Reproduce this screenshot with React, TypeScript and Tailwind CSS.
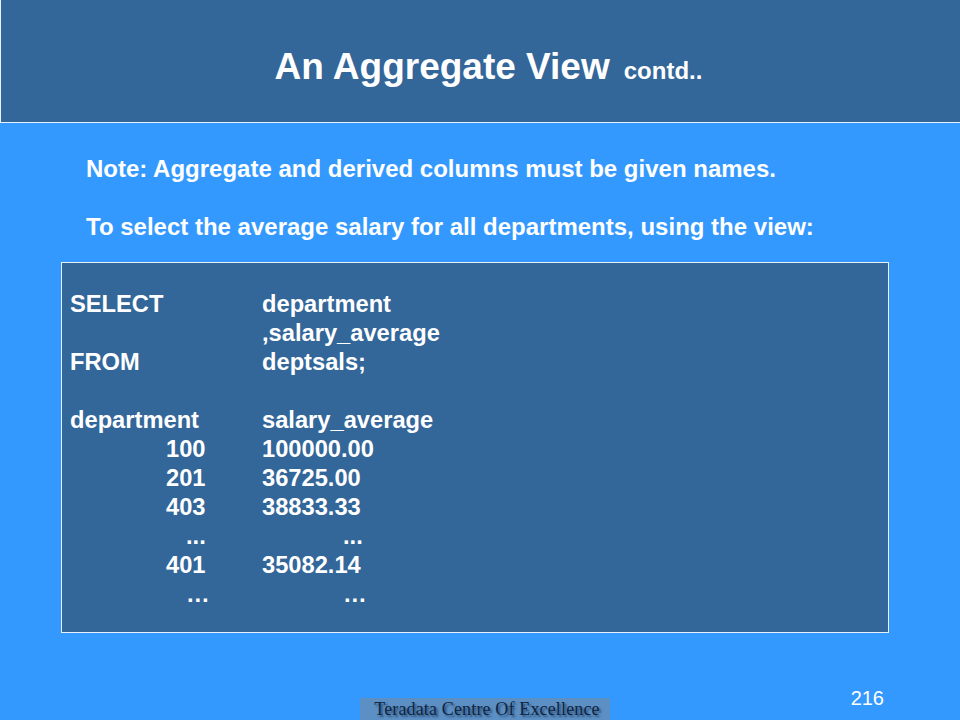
const rows: [string, string, string?][] = [
  ['SELECT', 'department'],
  ['', ',salary_average'],
  ['FROM', 'deptsals;'],
  ['', ''],
  ['department', 'salary_average'],
  ['100', '100000.00', 'pl-[96px]'],
  ['201', '36725.00', 'pl-[96px]'],
  ['403', '38833.33', 'pl-[96px]'],
  ['...', '...', 'dots'],
  ['401', '35082.14', 'pl-[96px]'],
  ['…', '…', 'dots'],
]

function CodeRow({ left, right, kind }: { left: string; right: string; kind?: string }) {
  if (kind === 'dots') {
    return (
      <div className="flex h-[29px]">
        <div className="w-[192px] pl-[116px]">{left}</div>
        <div className="pl-[81px]">{right}</div>
      </div>
    )
  }
  return (
    <div className="flex h-[29px]">
      <div className={`w-[192px] ${kind ?? ''}`}>{left}</div>
      <div>{right}</div>
    </div>
  )
}

export default function App() {
  return (
    <div className="w-[960px] h-[720px] overflow-hidden bg-[#3399ff] text-white font-['Liberation_Sans',Arial,sans-serif] font-bold flex flex-col">
      {/* Title bar */}
      <div className="h-[123px] shrink-0 bg-[#336699] border-l border-b border-[#e8f0f8] flex items-baseline justify-center pt-[46px] pl-[16px]">
        <span className="text-[37px] leading-[42px]">An Aggregate View</span>
        <span className="text-[24px] leading-[42px] ml-[14px]">contd..</span>
      </div>

      <div className="pl-[86px] pt-[31px] text-[24px] leading-[29px]">
        <p>Note: Aggregate and derived columns must be given names.</p>
        <p className="mt-[29px]">To select the average salary for all departments, using the view:</p>
      </div>

      {/* Query box */}
      <div className="ml-[61px] mt-[21px] w-[828px] h-[371px] shrink-0 bg-[#336699] border border-[#e8f0f8] pl-[8px] pt-[27px] text-[23.7px] leading-[29px]">
        {rows.map((r, i) => (
          <CodeRow key={i} left={r[0]} right={r[1]} kind={r[2]} />
        ))}
      </div>

      <div className="relative flex-1">
        <div className="absolute right-[76px] top-[53px] text-[20px] leading-[24px] font-normal">216</div>
        <div className="absolute left-[360px] bottom-0 w-[250px] h-[22px] bg-[#5c8fc4] flex items-center justify-center pl-[4px]">
          <span className="font-['Liberation_Serif',serif] font-normal text-[18px] leading-none tracking-[0.15px] text-[#0f2440] [text-shadow:2px_2px_2px_#2b5078]">Teradata Centre Of Excellence</span>
        </div>
      </div>
    </div>
  )
}
